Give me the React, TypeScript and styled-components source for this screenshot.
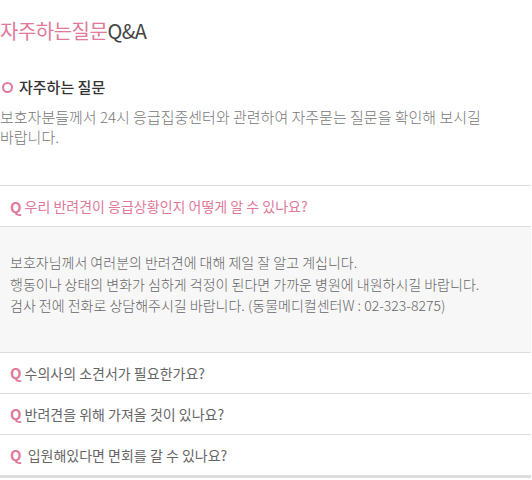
import React, { ReactElement } from 'react';
import styled, { createGlobalStyle } from 'styled-components';

const faqs = [
  { q: '우리 반려견이 응급상황인지 어떻게 알 수 있나요?', open: true },
  { q: '수의사의 소견서가 필요한가요?', open: false },
  { q: '반려견을 위해 가져올 것이 있나요?', open: false },
  { q: ' 입원해있다면 면회를 갈 수 있나요?', open: false },
];

export default function App(): ReactElement {
  return (
    <React.Fragment>
      <GlobalStyle />
      <Page>
        <Title>
          <Pink>자주하는질문</Pink>Q&amp;A
        </Title>
        <SectionHead>
          <Ring />
          자주하는 질문
        </SectionHead>
        <Desc>
          보호자분들께서 24시 응급집중센터와 관련하여 자주묻는 질문을 확인해 보시길
          <br />
          바랍니다.
        </Desc>
        <FaqList>
          {faqs.map((f, i) => (
            <React.Fragment key={i}>
              <QuestionRow $open={f.open}>
                <QMark>Q</QMark>
                <span style={{ whiteSpace: 'pre' }}>{f.q}</span>
              </QuestionRow>
              {f.open && (
                <Answer>
                  보호자님께서 여러분의 반려견에 대해 제일 잘 알고 계십니다.
                  <br />
                  행동이나 상태의 변화가 심하게 걱정이 된다면 가까운 병원에 내원하시길 바랍니다.
                  <br />
                  검사 전에 전화로 상담해주시길 바랍니다. (동물메디컬센터W : 02-323-8275)
                </Answer>
              )}
            </React.Fragment>
          ))}
        </FaqList>
      </Page>
    </React.Fragment>
  );
}

const GlobalStyle = createGlobalStyle`
  html, body { margin: 0; padding: 0; background: #fff; }
  body {
    font-family: "Noto Sans CJK KR", "Noto Sans", sans-serif;
    color: #666;
  }
`;

const Page = styled.div`
  width: 531px;
  display: flex;
  flex-direction: column;
`;

const Title = styled.h1`
  margin: 18px 0 0;
  font-size: 20px;
  line-height: 26px;
  font-weight: 400;
  letter-spacing: -0.5px;
  color: #444;
`;

const Pink = styled.span`
  color: #e0799a;
`;

const SectionHead = styled.h2`
  display: flex;
  align-items: center;
  gap: 6px;
  margin: 33px 0 0;
  font-size: 15px;
  line-height: 20px;
  font-weight: 500;
  color: #333;
`;

const Ring = styled.span`
  width: 7px;
  height: 7px;
  margin-left: 2px;
  border: 2px solid #e0799a;
  border-radius: 50%;
`;

const Desc = styled.p`
  margin: 10px 0 0;
  font-size: 15px;
  line-height: 20px;
  font-weight: 300;
  color: #777;
`;

const FaqList = styled.div`
  margin-top: 38px;
  border-bottom: 3px solid #ddd;
  display: flex;
  flex-direction: column;
`;

const QuestionRow = styled.div<{ $open: boolean }>`
  display: flex;
  align-items: center;
  gap: 3px;
  height: 40px;
  padding-left: 10px;
  border-top: 1px solid #ddd;
  font-size: 14px;
  font-weight: 400;
  color: ${(p) => (p.$open ? '#e0799a' : '#666')};
`;

const QMark = styled.span`
  font-weight: 700;
  font-size: 15px;
  color: #e0799a;
`;

const Answer = styled.div`
  background: #f7f7f7;
  border-top: 1px solid #ddd;
  padding: 25px 10px 35px;
  font-size: 14px;
  line-height: 21.5px;
  font-weight: 300;
  color: #666;
`;
